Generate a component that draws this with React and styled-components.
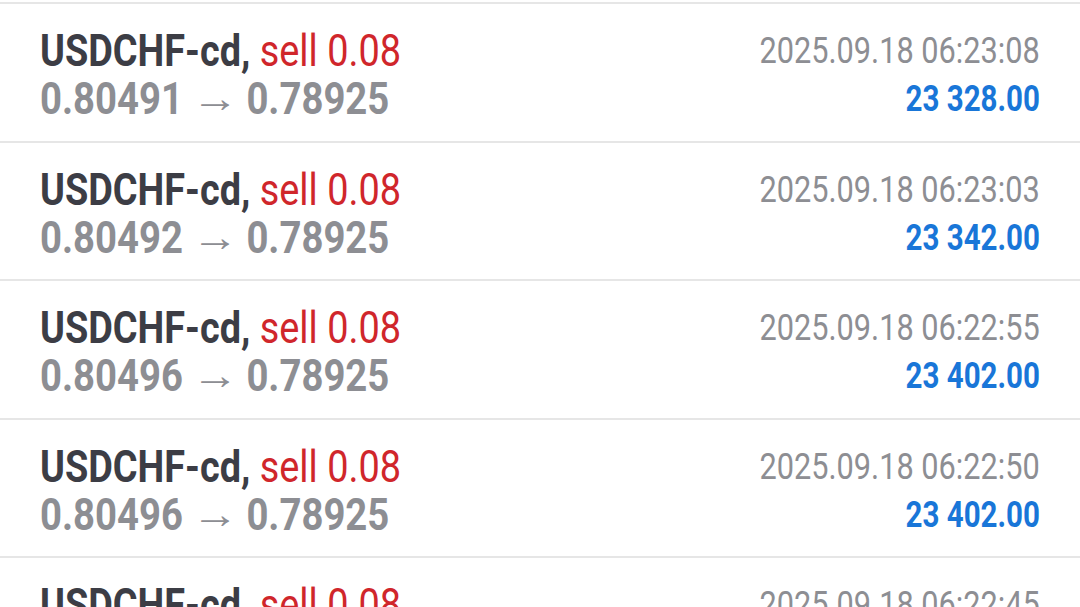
import styled, { createGlobalStyle } from 'styled-components';

const GlobalStyle = createGlobalStyle`
  html, body {
    margin: 0;
    padding: 0;
    background: #ffffff;
    overflow: hidden;
  }
  body {
    font-family: Roboto, "Liberation Sans", sans-serif;
  }
`;

const deals = [
  { symbol: 'USDCHF-cd', side: 'sell', volume: '0.08', open: '0.80491', close: '0.78925', time: '2025.09.18 06:23:08', profit: '23 328.00' },
  { symbol: 'USDCHF-cd', side: 'sell', volume: '0.08', open: '0.80492', close: '0.78925', time: '2025.09.18 06:23:03', profit: '23 342.00' },
  { symbol: 'USDCHF-cd', side: 'sell', volume: '0.08', open: '0.80496', close: '0.78925', time: '2025.09.18 06:22:55', profit: '23 402.00' },
  { symbol: 'USDCHF-cd', side: 'sell', volume: '0.08', open: '0.80496', close: '0.78925', time: '2025.09.18 06:22:50', profit: '23 402.00' },
  { symbol: 'USDCHF-cd', side: 'sell', volume: '0.08', open: '0.80496', close: '0.78925', time: '2025.09.18 06:22:45', profit: '23 402.00' },
];

const App = () => (
  <>
    <GlobalStyle />
    <List>
      {deals.map((deal, i) => (
        <Row key={i}>
          <Left>
            <Title>
              {deal.symbol},{' '}
              <Side>
                {deal.side} {deal.volume}
              </Side>
            </Title>
            <Prices>
              {deal.open}
              <Arrow>→</Arrow>
              {deal.close}
            </Prices>
          </Left>
          <Right>
            <Time>{deal.time}</Time>
            <Profit>{deal.profit}</Profit>
          </Right>
        </Row>
      ))}
    </List>
  </>
);

const List = styled.div`
  padding-top: 2px;
  display: flex;
  flex-direction: column;
`;

const Row = styled.div`
  box-sizing: border-box;
  height: 138.5px;
  border-top: 2px solid #e6e6e6;
  padding: 23px 40px 0;
  display: flex;
  justify-content: space-between;
  align-items: flex-start;
`;

const Left = styled.div`
  display: flex;
  flex-direction: column;
  align-items: flex-start;
`;

const Right = styled.div`
  display: flex;
  flex-direction: column;
  align-items: flex-end;
`;

const Line = styled.div`
  line-height: 48px;
  white-space: nowrap;
  transform-origin: ${(p) => (p.$end ? 'right' : 'left')} center;
`;

const Title = styled(Line)`
  font-size: 44px;
  font-weight: 700;
  color: #3c3d45;
  transform: scaleX(0.86);
`;

const Side = styled.span`
  font-weight: 400;
  color: #d0262b;
`;

const Prices = styled(Line)`
  display: flex;
  align-items: center;
  font-size: 44px;
  font-weight: 700;
  color: #8d8e93;
  transform: scaleX(0.87);
`;

const Arrow = styled.span`
  display: inline-block;
  margin: 0 16px 0 17px;
  font-weight: 400;
  font-size: 40px;
  transform: scaleX(1.35);
`;

const Time = styled(Line).attrs({ $end: true })`
  font-size: 37px;
  font-weight: 400;
  color: #8d8e93;
  transform: scaleX(0.83);
`;

const Profit = styled(Line).attrs({ $end: true })`
  font-size: 36px;
  font-weight: 700;
  color: #1976d8;
  transform: scaleX(0.82);
`;

export default App;
